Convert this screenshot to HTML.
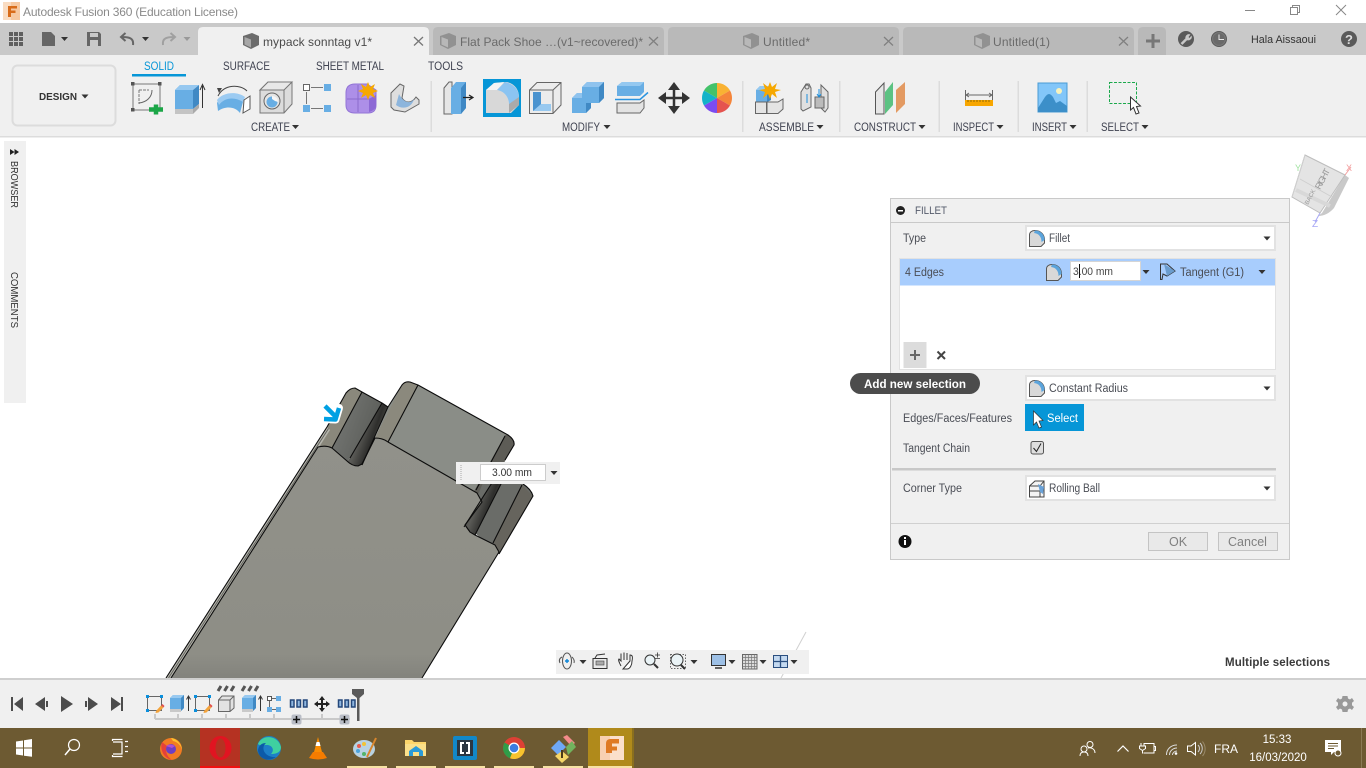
<!DOCTYPE html>
<html><head><meta charset="utf-8"><title>Autodesk Fusion 360</title>
<style>
html,body{margin:0;padding:0;background:#fff;width:1366px;height:768px;overflow:hidden}
svg{display:block;font-family:"Liberation Sans",sans-serif}
.l{font-size:11.500px;fill:#3f4250}
.p{font-size:11.500px;fill:#4a4d55}
.w{fill:#fff}
</style></head><body>
<svg width="1366" height="768" viewBox="0 0 1366 768" xmlns="http://www.w3.org/2000/svg">
<defs>
<linearGradient id="face" x1="0" y1="0" x2="0" y2="1"><stop offset="0" stop-color="#91918a"/><stop offset=".9" stop-color="#8e8e86"/><stop offset="1" stop-color="#83837d"/></linearGradient>
<linearGradient id="gro" x1="0" y1="0" x2="1" y2=".5"><stop offset="0" stop-color="#7a7c79"/><stop offset="1" stop-color="#5a5c58"/></linearGradient>
<linearGradient id="dg" x1="0" y1="0" x2="1" y2=".55"><stop offset="0" stop-color="#444442"/><stop offset=".45" stop-color="#5a5a56"/><stop offset=".7" stop-color="#2e2e2c"/><stop offset="1" stop-color="#5e5d58"/></linearGradient>
<g id="cube"><path d="M0 3L9 0L16 3V12L8 16L0 12Z" fill="currentColor"/><path d="M1.500 4L8 6.500V14.500L1.500 11.500Z" fill="#d9d9d9" fill-opacity=".55"/></g>
<path id="tri" d="M-3.500 0H3.500L0 4Z" fill="#333"/>
<g id="fil"><path d="M.5 16.500V5C.5 2 3 .5 6 .5C12 .5 15.500 5 15.500 10V13L12 16.500Z" fill="#d8d8d8" stroke="#555" stroke-width="1"/><path d="M6 .5C12 .5 15.500 5 15.500 10L12.500 12C12.500 7 10 3.500 5 3Z" fill="#5ba4dc"/></g>
<g id="rects"><rect x="0" y="0" width="3.500" height="7" fill="#8fb7e0" stroke="#24477a" stroke-width="1.500"/><rect x="6.500" y="0" width="3.500" height="7" fill="#8fb7e0" stroke="#24477a" stroke-width="1.500"/><rect x="13" y="0" width="3.500" height="7" fill="#8fb7e0" stroke="#24477a" stroke-width="1.500"/></g>
<g id="sk"><rect x=".5" y=".5" width="14" height="14" fill="none" stroke="#666"/><rect x="-1" y="-1" width="3" height="3" fill="#0b8fdc"/><rect x="13" y="-1" width="3" height="3" fill="#0b8fdc"/><rect x="-1" y="13" width="3" height="3" fill="#0b8fdc"/><path d="M9 15L14 9.500L16.500 11.500L11.500 16.500L8.500 17Z" fill="#f3a33c"/><path d="M14 9.500L16.500 11.500L17.500 10L15.500 8Z" fill="#e2504c"/></g>
<g id="ext"><path d="M0 3L3 0H14V13L11 16H0Z" fill="#68aee4"/><path d="M0 3L3 0H14L11 3Z" fill="#98c9f0"/><path d="M11 3L14 0V13L11 16Z" fill="#4089c4"/><rect x="0" y="14" width="11" height="3" fill="#c9c9c9"/><path d="M18.500 16V2M16.500 4.500L18.500 1L20.500 4.500" stroke="#333" fill="none"/></g>
<g id="hatch" stroke="#555" stroke-width="3"><path d="M0 5L3 0M6.500 5L9.500 0M13 5L16 0"/></g>
<g id="plusb"><rect x="-5" y="-5" width="10" height="10" rx="2" fill="#b9bdc6"/><path d="M-3.500 0H3.500M0-3.500V3.500" stroke="#111" stroke-width="1.500"/></g>
</defs>

<!-- viewport -->
<rect width="1366" height="768" fill="#fff"/>

<!-- title bar -->
<rect x="3" y="2" width="17" height="18" fill="#f6c9a2"/><rect x="3" y="2" width="8" height="18" fill="#f9dcc2"/>
<path d="M8 17V6H17V8.500H11V10.500H15.500V13H11V17Z" fill="#d86c1a"/>
<text x="23" y="16" font-size="12" fill="#8a8a8a" textLength="215">Autodesk Fusion 360 (Education License)</text>
<path d="M1245 10.500H1255" stroke="#888"/>
<path d="M1290.500 7.500H1297.500V14.500H1290.500ZM1292.500 7V5.500H1299.500V12.500H1298" fill="none" stroke="#888"/>
<path d="M1336 5L1346 15M1346 5L1336 15" stroke="#888"/>

<!-- tab bar -->
<rect x="0" y="23" width="1366" height="32" fill="#c9c9c9"/>
<g fill="#5f5f5f"><rect x="9" y="32" width="4" height="4"/><rect x="14" y="32" width="4" height="4"/><rect x="19" y="32" width="4" height="4"/><rect x="9" y="37" width="4" height="4"/><rect x="14" y="37" width="4" height="4"/><rect x="19" y="37" width="4" height="4"/><rect x="9" y="42" width="4" height="4"/><rect x="14" y="42" width="4" height="4"/><rect x="19" y="42" width="4" height="4"/></g>
<path d="M42 32H51L55 36V46H42Z" fill="#666"/><use href="#tri" x="64.500" y="37"/>
<path d="M87 32H99L101 34V46H87Z" fill="#666"/><rect x="90" y="33" width="8" height="4" fill="#c9c9c9"/><rect x="90" y="40" width="8" height="6" fill="#c9c9c9"/>
<path d="M133 45C134 38 129 37 122 37M125.500 33L121 37L125.500 41" fill="none" stroke="#666" stroke-width="2"/><use href="#tri" x="145.500" y="37"/>
<path d="M163 45C162 38 167 37 174 37M170.500 33L175 37L170.500 41" fill="none" stroke="#a0a0a0" stroke-width="2"/><path d="M183.500 37H190.500L187 41Z" fill="#999"/>

<path d="M198 55V32Q198 27 203 27H424Q429 27 429 32V55Z" fill="#f0f0f0"/>
<use href="#cube" x="243" y="33" color="#6c6c6c"/>
<text x="263" y="46" font-size="12" fill="#4a4a4a" textLength="109">mypack sonntag v1*</text>
<path d="M414 37L423 45.500M423 37L414 45.500" stroke="#777" stroke-width="1.300"/>

<g fill="#b9b9b9"><path d="M433 55V32Q433 27 438 27H659Q664 27 664 32V55Z"/><path d="M668 55V32Q668 27 673 27H894Q899 27 899 32V55Z"/><path d="M903 55V32Q903 27 908 27H1129Q1134 27 1134 32V55Z"/><path d="M1138 55V32Q1138 27 1143 27H1161Q1166 27 1166 32V55Z"/></g>
<g color="#919191"><use href="#cube" x="440" y="33"/><use href="#cube" x="743" y="33"/><use href="#cube" x="974" y="33"/></g>
<text x="460" y="46" font-size="12" fill="#6a6a6a" textLength="183">Flat Pack Shoe …(v1~recovered)*</text>
<text x="763" y="46" font-size="12" fill="#6a6a6a" textLength="47">Untitled*</text>
<text x="993" y="46" font-size="12" fill="#6a6a6a" textLength="57">Untitled(1)</text>
<g stroke="#808080" stroke-width="1.300"><path d="M649 37L658 45.500M658 37L649 45.500M884 37L893 45.500M893 37L884 45.500M1119 37L1128 45.500M1128 37L1119 45.500"/></g>
<path d="M1146 41H1160M1153 34V48" stroke="#777" stroke-width="3"/>
<circle cx="1186" cy="39" r="8" fill="#5a5a5a"/><path d="M1181.500 44L1186.500 39" stroke="#c9c9c9" stroke-width="2.500"/><path d="M1186 39.500A3.500 3.500 0 0 1 1190.500 34.500L1188.500 37L1189.500 38L1191.500 35.500A3.500 3.500 0 0 1 1186 39.500Z" fill="#c9c9c9"/>
<circle cx="1219" cy="39" r="7.500" fill="#777" stroke="#5a5a5a"/><circle cx="1219" cy="39" r="5.800" fill="#6a6a6a"/><path d="M1219 34.500V39.500H1224" stroke="#e8e8e8" fill="none"/>
<text x="1251" y="43" font-size="11" fill="#333" textLength="65" lengthAdjust="spacingAndGlyphs">Hala Aissaoui</text>
<circle cx="1349" cy="39" r="8" fill="#5a5a5a"/><text x="1349" y="44" font-size="13" font-weight="bold" fill="#ddd" text-anchor="middle">?</text>

<!-- ribbon -->
<rect x="0" y="55" width="1366" height="81" fill="#f0f0f0"/>
<rect x="0" y="136" width="1366" height="1.500" fill="#dcdcdc"/>
<rect x="12.500" y="65.500" width="103" height="60" rx="5" fill="#f0f0f0" stroke="#dcdcdc" stroke-width="2"/>
<text x="39" y="100" font-size="10.500" font-weight="bold" fill="#333" textLength="38" lengthAdjust="spacingAndGlyphs">DESIGN</text>
<use href="#tri" x="85" y="94.500"/>
<text x="144" y="70" font-size="11.500" fill="#0696d7" textLength="30" lengthAdjust="spacingAndGlyphs">SOLID</text>
<rect x="132" y="74" width="54" height="2.500" fill="#0696d7"/>
<text x="223" y="70" font-size="11.500" fill="#3f4250" textLength="47" lengthAdjust="spacingAndGlyphs">SURFACE</text>
<text x="316" y="70" font-size="11.500" fill="#3f4250" textLength="68" lengthAdjust="spacingAndGlyphs">SHEET METAL</text>
<text x="428" y="70" font-size="11.500" fill="#3f4250" textLength="35" lengthAdjust="spacingAndGlyphs">TOOLS</text>

<!-- create icons -->
<g>
<rect x="133" y="84" width="27" height="26" fill="none" stroke="#777"/>
<g fill="#555"><rect x="131" y="82" width="3.500" height="3.500"/><rect x="158" y="82" width="3.500" height="3.500"/><rect x="131" y="108" width="3.500" height="3.500"/></g>
<path d="M139 90H149M139 90V104" stroke="#777" stroke-dasharray="3 1" fill="none"/><path d="M139 103C147 102 152 97 152 90" fill="none" stroke="#666"/>
<path d="M156 104.500V114.500M149 109.500H163" stroke="#1ba647" stroke-width="4.500"/>
<path d="M175 90L180 85H193V109L190 109H175Z" fill="#68aee4"/><path d="M175 90L180 85H199L193 90Z" fill="#96c8f0"/><path d="M193 90L199 85V104L193 109Z" fill="#4089c4"/><rect x="175" y="109" width="18" height="5" fill="#c4c4c4"/><path d="M193 109L199 104V108L193 114Z" fill="#aaa"/>
<path d="M202.500 108V86M200 90L202.500 84.500L205 90" stroke="#333" fill="none"/>
<path d="M218 96C224 84 240 84 247 91" fill="none" stroke="#444"/><path d="M222 88L217 88L219 93Z" fill="#444"/>
<path d="M217 103C222 93 236 92 244 98L240 113C235 106 225 106 218 111Z" fill="#68aee4"/><path d="M217 100C223 92 237 91 245 97L243 102C235 97 225 97 219 105Z" fill="#9ccbf2"/><path d="M244 100L250 96V109L243 113Z" fill="#fff" stroke="#555"/>
<path d="M260 90L268 82H292V104L284 113H260Z" fill="#dcdcdc" stroke="#777"/><path d="M260 90L268 82H292L284 90Z" fill="#e8e8e8" stroke="#777"/><path d="M284 90V113" stroke="#777"/>
<circle cx="272" cy="101" r="8" fill="#e5e5e5" stroke="#666"/><circle cx="272" cy="102" r="5.500" fill="#68aee4"/><path d="M272 96A6 6 0 0 1 278 102L275 101L272 99Z" fill="#f6f6f6"/>
<rect x="303.500" y="84.500" width="6" height="6" fill="#fff" stroke="#666"/><rect x="324" y="84" width="7" height="7" fill="#68aee4"/><rect x="303" y="105" width="7" height="7" fill="#68aee4"/><rect x="324" y="105" width="7" height="7" fill="#68aee4"/>
<path d="M311 87.500H323M306.500 92V104M311 108.500H323" stroke="#777"/>
<path d="M346 93Q346 84 355 84H367L376 90V105Q376 113 368 113H355Q346 113 346 105Z" fill="#ad8fe8" stroke="#9274d6"/><path d="M347 99H370M358 85V112" stroke="#8a6bcd"/><path d="M369 99L376 95V105Q376 110 369 112Z" fill="#8d69d5"/>
<path d="M368 82L370 87L375 84L373 89L378 91L373 93L375 98L370 95L368 100L366 95L361 98L363 93L358 91L363 89L361 84L366 87Z" fill="#f6a800"/>
<path d="M391 93L400 84L404 86L402 98C406 104 412 103 416 97L419 100V104L405 112L394 110L391 107Z" fill="#dedede" stroke="#666"/><path d="M399 94C403 102 410 105 414 99C412 108 402 110 396 105Z" fill="#8db5dc"/>
</g>
<rect x="430.500" y="81" width="1.500" height="51" fill="#dcdcdc"/>

<!-- modify icons -->
<g>
<path d="M444 88L449 82H452V114H444Z" fill="#e6e6e6" stroke="#666"/><path d="M451 88L456 82H466V108L461 114H451Z" fill="#68aee4"/><path d="M461 88L466 82V108L461 114Z" fill="#3f88c4"/><path d="M463 97.500H472M469 95L473 97.500L469 100" stroke="#222" fill="none" stroke-width="1.200"/>
<rect x="483" y="79" width="38" height="38" fill="#0696d7"/>
<path d="M486 112V90L494 83L507 82C515 84 519 90 519 97V105L511 113H486Z" fill="#d8d8d8"/><path d="M486 90L494 83L504 82L497 90Z" fill="#f4f4f4"/><path d="M497 90L505 82C514 84 519 90 519 98L509 104C509 97 504 91 497 90Z" fill="#8bc4f2"/><path d="M509 104L519 97V105L509 113Z" fill="#aaa"/>
<path d="M529.500 90L537 82.500H561V105L553 113.500H529.500Z" fill="#ececec" stroke="#666"/><path d="M529.500 90H553V113.500M553 90L561 82.500" fill="none" stroke="#666"/><path d="M533 92H541V104H551V111H533Z" fill="#4a93cf"/><path d="M541 104H551V111H533Z" fill="#98c9f0"/>
<path d="M572 98L577 93H582V87L587 82H604V98L599 103H591V108L586 113H572Z" fill="#68aee4"/><path d="M582 87L587 82H604L599 87Z" fill="#8fc3ee"/><path d="M599 87L604 82V98L599 103Z" fill="#4089c4"/><path d="M586 103H591V108L586 113Z" fill="#4089c4"/><path d="M572 98L577 93H582V98Z" fill="#8fc3ee"/>
<path d="M617 86L622 82H644V92L640 96H617Z" fill="#68aee4"/><path d="M617 86L622 82H644L640 86Z" fill="#94c8f0"/><path d="M617 103H640L644 100V108L640 113H617Z" fill="#e3e3e3" stroke="#666"/><path d="M615 99.500H640L648 92.500" fill="none" stroke="#2a94e0" stroke-width="1.500"/>
<path d="M674 88V108M664 98H684" stroke="#333" stroke-width="2.500"/><path d="M674 82L680 90H668ZM674 114L680 106H668ZM658 98L666 92V104ZM690 98L682 92V104Z" fill="#333"/>
<path d="M717 98V83A15 15 0 0 1 730 90.500Z" fill="#f9b233"/><path d="M717 98L730 90.500A15 15 0 0 1 732 98A15 15 0 0 1 730 105.500Z" fill="#f5853a"/><path d="M717 98L730 105.500A15 15 0 0 1 717 113Z" fill="#e5534f"/><path d="M717 98V113A15 15 0 0 1 704 105.500Z" fill="#7b4cf0"/><path d="M717 98L704 105.500A15 15 0 0 1 704 90.500Z" fill="#13b3c9"/><path d="M717 98L704 90.500A15 15 0 0 1 717 83Z" fill="#43c26a"/>
</g>
<rect x="742" y="81" width="1.500" height="51" fill="#dcdcdc"/>

<!-- assemble -->
<g>
<path d="M756 90L760 86H771V100L767 102H756Z" fill="#68aee4"/><path d="M756 90L760 86H771L767 90Z" fill="#94c8f0"/><path d="M767 90L771 86V100L767 102Z" fill="#3f88c4"/>
<path d="M770 82L772 87L777 83L775 89L781 90L775 92L777 98L772 94L770 99L768 94L763 98L765 92L759 90L765 89L763 83L768 87Z" fill="#f6a800"/>
<rect x="755.500" y="102" width="11" height="11.500" fill="#e4e4e4" stroke="#666"/><path d="M767 102H778L783 99V109L778 113.500H767Z" fill="#e4e4e4" stroke="#666"/>
<path d="M801 92L806 84H809L811 88V107L803 111L801 109Z" fill="#e0e0e0" stroke="#666"/><circle cx="807" cy="87" r="2" fill="none" stroke="#666"/><path d="M807 94V103" stroke="#1c8edb"/>
<path d="M821 85L828 92V108L825 112L821 108Z" fill="#e0e0e0" stroke="#666"/><rect x="815" y="97" width="9" height="11" fill="#bbb" stroke="#666"/><path d="M819 89V97M817 94L819 97L821 94" stroke="#1c8edb" fill="none"/>
</g>
<rect x="839" y="81" width="1.500" height="51" fill="#dcdcdc"/>

<!-- construct -->
<path d="M875.500 92L884 83V114H875.500Z" fill="#e6e6e6" stroke="#555"/><path d="M885 92L893 82V105L885 114Z" fill="#5cc282"/><path d="M896 90L905 82V104L896 113Z" fill="#e39a62"/>
<rect x="938.500" y="81" width="1.500" height="51" fill="#dcdcdc"/>

<!-- inspect -->
<path d="M965.500 90V100M992.500 90V100M966 95H992M969 93L966 95L969 97M989 93L992 95L989 97" stroke="#666" fill="none"/>
<rect x="965" y="100" width="28" height="6" fill="#f7a600"/><path d="M968 100V102M971 100V102M974 100V102M977 100V102M980 100V102M983 100V102M986 100V102M989 100V102" stroke="#7a5c00" stroke-width=".8"/>
<rect x="1017.500" y="81" width="1.500" height="51" fill="#dcdcdc"/>

<!-- insert -->
<rect x="1038" y="83" width="29" height="29" fill="#82c6f9" stroke="#4a9bd4"/><path d="M1038 108L1045 97C1048 93 1050 93 1053 97L1056 103L1060 101L1067 106V112H1038Z" fill="#3c8fc9"/><circle cx="1059" cy="91" r="3" fill="#f7f2bd"/>
<rect x="1086.500" y="81" width="1.500" height="51" fill="#dcdcdc"/>

<!-- select -->
<rect x="1109.500" y="82.500" width="27" height="21" fill="none" stroke="#1aa84b" stroke-dasharray="3 1.500"/>
<path d="M1130.500 97V110L1133.500 107.500L1136 114L1139 113L1136.500 106.500L1140.500 106Z" fill="#fff" stroke="#333"/>

<!-- ribbon labels -->
<text x="251" y="131" class="l" textLength="39" lengthAdjust="spacingAndGlyphs">CREATE</text><use href="#tri" x="295.500" y="125"/>
<text x="562" y="131" class="l" textLength="38" lengthAdjust="spacingAndGlyphs">MODIFY</text><use href="#tri" x="607" y="125"/>
<text x="759" y="131" class="l" textLength="55" lengthAdjust="spacingAndGlyphs">ASSEMBLE</text><use href="#tri" x="820" y="125"/>
<text x="854" y="131" class="l" textLength="62" lengthAdjust="spacingAndGlyphs">CONSTRUCT</text><use href="#tri" x="922" y="125"/>
<text x="953" y="131" class="l" textLength="41" lengthAdjust="spacingAndGlyphs">INSPECT</text><use href="#tri" x="1000" y="125"/>
<text x="1032" y="131" class="l" textLength="35" lengthAdjust="spacingAndGlyphs">INSERT</text><use href="#tri" x="1073" y="125"/>
<text x="1101" y="131" class="l" textLength="38" lengthAdjust="spacingAndGlyphs">SELECT</text><use href="#tri" x="1145" y="125"/>

<!-- left panel -->
<rect x="4" y="141" width="22" height="262" fill="#f0f0f0"/>
<path d="M10 149V155L14.500 152ZM14.500 149V155L19 152Z" fill="#222"/>
<text transform="translate(11,161) rotate(90)" font-size="10.500" fill="#333" textLength="47" lengthAdjust="spacingAndGlyphs">BROWSER</text>
<text transform="translate(11,272) rotate(90)" font-size="10.500" fill="#333" textLength="56" lengthAdjust="spacingAndGlyphs">COMMENTS</text>

<!-- model -->
<g stroke-linejoin="round">
<path d="M375 438L388 408L402 385Q405 381 410 382L418 385L508 435Q515 440 514 445L482 502L388 442Z" fill="#8a8d87"/>
<path d="M375 438L402 385Q405 381 410 382L418 385L388 442Z" fill="#8b897d"/>
<path d="M505 435L508 435Q515 440 514 445L480 505L472 495Z" fill="#5d5c56"/>
<path d="M332 448L362 392L382 403L350 458L347 462Z" fill="url(#gro)"/>
<path d="M316 447L346 393Q350 388 355 388L362 392L332 448Z" fill="#8a887c"/>
<path d="M382 403L388 407L362 466L358 468L347 462L350 458Z" fill="url(#dg)"/>
<path d="M483 483L523 484Q531 489 533 496L499 554L475 533L465 525Z" fill="#6a6c68"/>
<path d="M495 478L503 480L475 535L464 527Z" fill="url(#dg)"/>
<path d="M522 485L533 496L499 554L493 543Z" fill="#66645d"/>
<path d="M166 678L327 427L330 430L171 678Z" fill="#b5b5ad"/>
<path d="M168.500 678L328.500 428.500" stroke="#5f5f5a" stroke-width=".9"/>
<path d="M171 678L318 447Q326 445 332 448L347 461Q352 466 358 466L362 464L375 438Q383 438 388 442L477 493L482 502L465 525L470 532L475 535L495 545L499 552L422 678Z" fill="url(#face)"/>
<g fill="none" stroke="#0c0c0c" stroke-width="1.100">
<path d="M166 678L327 427M171 678L318 447Q326 445 332 448L347 461Q352 466 358 466L362 464L375 438Q383 438 388 442L477 493L482 502L465 525L470 532L475 535L495 545L499 552L422 678"/>
<path d="M327 427L346 393Q350 388 355 388L362 392L382 403L388 407L402 385Q405 381 410 382L418 385L508 435Q515 440 514 445L505 460"/>
<path d="M362 392L332 448M382 403L350 458M388 407L362 465M418 385L388 442M505 436L476 490"/>
<path d="M503 480L475 535M522 485L493 543M495 478L464 527M523 484Q531 489 533 496L499 554"/>
</g>
</g>
<path d="M325 406L336 417M339 408L335.500 419.500L324 419" fill="none" stroke="#fff" stroke-width="8" stroke-linecap="round" stroke-linejoin="round"/>
<path d="M325 406L336 417M339 408L335.500 419.500L324 419" fill="none" stroke="#00a0e3" stroke-width="4.500" stroke-linejoin="round"/>

<!-- dimension input -->
<rect x="456" y="462" width="104" height="22" fill="#f0f0f0"/>
<path d="M461 465V481" stroke="#ccc" stroke-dasharray="1 1" stroke-width="2"/>
<rect x="480.500" y="464.500" width="65" height="16" fill="#fff" stroke="#ccc"/>
<text x="492" y="476" font-size="11" fill="#333" textLength="40" lengthAdjust="spacingAndGlyphs">3.00 mm</text>
<use href="#tri" x="554" y="471"/>

<!-- view cube -->
<path d="M1322 213L1345 175L1349 178L1334 208Q1327 216 1318 216Z" fill="#c9c9c9"/>
<path d="M1305 155L1345 175L1320 213L1292 197Z" fill="#e4e4e4" stroke="#bdbdbd"/>
<path d="M1300 179L1332 197M1292 197L1305 155" stroke="#cfcfcf" fill="none"/>
<path d="M1296 190L1330 206" stroke="#d8d8d8" stroke-width="4"/>
<text transform="translate(1320,190) rotate(-62)" font-size="9" fill="#999" textLength="22">RIGHT</text>
<text transform="translate(1308,205) rotate(-62)" font-size="6" fill="#999">BACK</text>
<text x="1295" y="171" font-size="9" fill="#9fe29f">Y</text><text x="1346" y="171" font-size="9" fill="#f3a0a0">X</text><text x="1312" y="227" font-size="10" fill="#a8a8f5">Z</text>
<path d="M1345 175L1351 167" stroke="#f3a0a0"/><path d="M1320 213L1315 222" stroke="#a8a8f5"/>

<!-- panel -->
<rect x="890.500" y="198.500" width="399" height="361" fill="#f0f0f0" stroke="#c9c9c9"/>
<path d="M891 222.500H1289" stroke="#c9c9c9"/>
<circle cx="900.500" cy="210.500" r="4.500" fill="#222"/><rect x="898" y="210" width="5" height="1.500" fill="#fff"/>
<text x="915" y="214" font-size="11" fill="#555b6b" textLength="32" lengthAdjust="spacingAndGlyphs">FILLET</text>
<text x="903" y="242" class="p" textLength="23" lengthAdjust="spacingAndGlyphs">Type</text>
<g fill="#fff" stroke="#e2e2e2" stroke-width="2"><rect x="1026" y="226" width="249" height="24"/><rect x="1026" y="376" width="249" height="24"/><rect x="1026" y="476" width="249" height="24"/></g>
<use href="#fil" x="1029" y="230"/><use href="#fil" x="1029" y="380"/>
<text x="1049" y="242" class="p" textLength="21" lengthAdjust="spacingAndGlyphs">Fillet</text>
<use href="#tri" x="1267" y="236.500"/><use href="#tri" x="1267" y="386.500"/><use href="#tri" x="1267" y="486.500"/>

<rect x="899.500" y="258.500" width="376" height="111" fill="#fff" stroke="#e2e2e2"/>
<rect x="900" y="259" width="375" height="26.500" fill="#a8cdfd"/>
<text x="905" y="276" class="p" textLength="39" lengthAdjust="spacingAndGlyphs">4 Edges</text>
<use href="#fil" x="1046" y="264"/>
<rect x="1070.500" y="261.500" width="70" height="19" fill="#fff" stroke="#d5d5d5"/>
<text x="1073" y="275" font-size="11" fill="#444" textLength="40" lengthAdjust="spacingAndGlyphs">3.00 mm</text>
<rect x="1079" y="264" width="1" height="14" fill="#111"/>
<use href="#tri" x="1146" y="270"/>
<path d="M1160.500 264H1167L1175 271L1167 276L1163 274L1162 279.500L1160.500 279.500Z" fill="#a8cdfd" stroke="#333"/><path d="M1164 264L1175 271L1167 276Z" fill="#6a9ccd"/>
<text x="1180" y="276" class="p" textLength="64" lengthAdjust="spacingAndGlyphs">Tangent (G1)</text>
<use href="#tri" x="1262" y="270"/>
<rect x="903.500" y="342" width="23" height="26" fill="#dcdcdc"/>
<path d="M910 355H920M915 350V360" stroke="#666" stroke-width="2"/>
<path d="M937.500 351.500L945 359M945 351.500L937.500 359" stroke="#444" stroke-width="2"/>

<text x="1049" y="392" class="p" textLength="79" lengthAdjust="spacingAndGlyphs">Constant Radius</text>
<rect x="850" y="373" width="130" height="21" rx="10.500" fill="#4c4c4c"/>
<text x="864" y="388" font-size="11.500" font-weight="bold" fill="#fff" textLength="102" lengthAdjust="spacingAndGlyphs">Add new selection</text>

<text x="903" y="422" class="p" textLength="109" lengthAdjust="spacingAndGlyphs">Edges/Faces/Features</text>
<rect x="1025" y="404" width="59" height="27" fill="#0696d7"/>
<path d="M1033.500 411V425L1036.500 422L1039 428L1041.500 427L1039 421L1043 420.500Z" fill="#fff" stroke="#333" stroke-width=".7"/>
<text x="1047" y="422" font-size="11.500" fill="#fff" textLength="31" lengthAdjust="spacingAndGlyphs">Select</text>
<text x="903" y="452" class="p" textLength="67" lengthAdjust="spacingAndGlyphs">Tangent Chain</text>
<rect x="1031" y="441.500" width="12.500" height="12.500" rx="2" fill="#dedede" stroke="#555"/>
<path d="M1033.500 448L1036.500 451.500L1041 443.500" fill="none" stroke="#222"/>
<rect x="892" y="468" width="384" height="2.500" fill="#c8c8c8"/>
<text x="903" y="492" class="p" textLength="59" lengthAdjust="spacingAndGlyphs">Corner Type</text>
<path d="M1029.500 486L1035 481H1044V497H1029.500ZM1029.500 486H1040V497M1040 486L1044 481M1029.500 491H1040" fill="#f4f4f4" stroke="#444"/><path d="M1038 484L1044 487L1043 494L1040 492Z" fill="#6aa2d8"/>
<text x="1049" y="492" class="p" textLength="51" lengthAdjust="spacingAndGlyphs">Rolling Ball</text>
<path d="M891 523.500H1289" stroke="#d0d0d0"/>
<circle cx="905" cy="541.500" r="6.500" fill="#111"/><rect x="904" y="540" width="2" height="5" fill="#fff"/><rect x="904" y="537" width="2" height="2" fill="#fff"/>
<rect x="1148.500" y="532.500" width="59" height="18" fill="#e9e9e9" stroke="#c4c4c4"/>
<rect x="1218.500" y="532.500" width="59" height="18" fill="#e9e9e9" stroke="#c4c4c4"/>
<text x="1178" y="546" font-size="12.500" fill="#808080" text-anchor="middle">OK</text>
<text x="1247.500" y="546" font-size="12.500" fill="#808080" text-anchor="middle">Cancel</text>

<!-- nav bar -->
<path d="M806 632L781 678" stroke="#d0d0d0"/>
<rect x="556" y="650" width="253" height="24" fill="#f0f0f0"/>
<ellipse cx="567" cy="661" rx="4.500" ry="8" fill="none" stroke="#555"/><path d="M562 657Q558 659 560 663M572 657Q575 660 574 663" fill="none" stroke="#555"/><path d="M565 661H569M567 659V663" stroke="#0a85d8" stroke-width="1.400"/>
<use href="#tri" x="583" y="660"/>
<rect x="593" y="658.500" width="14" height="10" fill="#e9e9e9" stroke="#333"/><rect x="596" y="661" width="8" height="4" fill="#aaa" stroke="#444" stroke-width=".6"/><path d="M595 658L597 655L605 654" stroke="#333" fill="none"/>
<path d="M621 666C619 662 618 660 619 659L621 661V654M621 660V653.500M624 660V652.500M627 660V653M630 661V655C632 655 633 656 632 661C632 665 630 669 627 669H623Z" fill="#fff" stroke="#333"/>
<circle cx="650" cy="660" r="5" fill="#eaf3f6" stroke="#333"/><path d="M654 664L658 668" stroke="#333" stroke-width="2"/><path d="M655 655H660M657.500 652.500V657.500M655 658.500H660" stroke="#333" stroke-width=".8"/>
<rect x="670.500" y="654.500" width="15" height="14" fill="none" stroke="#666" stroke-dasharray="1.500 1.500"/><circle cx="677" cy="660" r="6" fill="#eaf3f6" stroke="#333"/><path d="M681 665L685 669" stroke="#333" stroke-width="2"/>
<use href="#tri" x="694" y="660"/>
<rect x="711.500" y="654.500" width="14" height="11" fill="#9dc0e6" stroke="#333"/><path d="M715 668H722" stroke="#333" stroke-width="1.500"/><use href="#tri" x="732" y="660"/>
<g stroke="#666" fill="#dcdcdc"><rect x="742.500" y="654.500" width="14.500" height="14.500"/></g><path d="M745.500 654.500V669M748.500 654.500V669M751.500 654.500V669M754.500 654.500V669M742.500 657.500H757M742.500 660.500H757M742.500 663.500H757M742.500 666.500H757" stroke="#777" stroke-width=".7"/>
<use href="#tri" x="763" y="660"/>
<rect x="773.500" y="655.500" width="14" height="12" fill="#c4d9f0" stroke="#2b4f80"/><path d="M773.500 661.500H787.500M780.500 655.500V667.500" stroke="#2b4f80" stroke-width="1.300"/><use href="#tri" x="794" y="660"/>
<text x="1225" y="666" font-size="11.500" font-weight="bold" fill="#3a3a3a" textLength="105">Multiple selections</text>

<!-- timeline -->
<rect x="0" y="678" width="1366" height="2" fill="#cfcfcf"/>
<rect x="0" y="680" width="1366" height="48" fill="#f0f0f0"/>
<g fill="#4c4c4c">
<path d="M11 697H13V711H11ZM23 697V711L14 704Z"/>
<path d="M45 697V711L35 704ZM46 701H48V707H46Z"/>
<path d="M61 696V712L73 704Z"/>
<path d="M85 701H87V707H85ZM88 697V711L98 704Z"/>
<path d="M111 697V711L121 704ZM121 697H123V711H121Z"/>
</g>
<use href="#sk" x="147" y="696"/><use href="#ext" x="170" y="695"/><use href="#sk" x="195" y="696"/>
<use href="#hatch" x="218" y="686"/>
<path d="M218.500 700L222 696H234V708L230 711.500H218.500Z" fill="#e2e2e2" stroke="#666"/><path d="M218.500 700H230V711.500M230 700L234 696" fill="none" stroke="#666"/>
<use href="#hatch" x="242" y="686"/><use href="#ext" x="242" y="695"/>
<rect x="267.500" y="696.500" width="4" height="4" fill="#fff" stroke="#555"/><rect x="276" y="696" width="5" height="5" fill="#68aee4"/><rect x="267" y="707" width="5" height="5" fill="#68aee4"/><rect x="276" y="707" width="5" height="5" fill="#68aee4"/><path d="M272 698.500H276M269.500 701V707M272 709.500H276" stroke="#666"/>
<use href="#rects" x="290.500" y="700"/>
<path d="M322 696L325 700H323V703H326V701L330 704L326 707V705H323V708H325L322 712L319 708H321V705H318V707L314 704L318 701V703H321V700H319Z" fill="#222"/>
<use href="#rects" x="338.500" y="700"/>
<path d="M155 719H350" stroke="#c9c9c9" stroke-width="2"/>
<path d="M155 714V719M178 714V719M202 714V719M226 714V719M250 714V719M274 714V719M322 714V719" stroke="#c9c9c9" stroke-width="2"/>
<use href="#plusb" x="296.500" y="719.500"/><use href="#plusb" x="344.500" y="719.500"/>
<path d="M352 689H364V694L359.500 698V721H357V698L352 694Z" fill="#5a5a5a"/>
<path d="M1342.500 696H1347.500L1348 698.500L1350 699.500L1352 698L1354 701L1352 702.800V705.200L1354 707L1352 710L1350 708.500L1348 709.500L1347.500 712H1342.500L1342 709.500L1340 708.500L1338 710L1336 707L1338 705.200V702.800L1336 701L1338 698L1340 699.500L1342 698.500Z" fill="#999"/><circle cx="1345" cy="704" r="2.500" fill="#f0f0f0"/>

<!-- taskbar -->
<rect x="0" y="728" width="1366" height="40" fill="#6d5a32"/>
<g fill="#fff"><path d="M16 741.500L23 740.500V747.500H16ZM24 740.300L32 739V747.500H24ZM16 748.500H23V755.500L16 754.500ZM24 748.500H32V756.800L24 755.700Z"/></g>
<circle cx="74" cy="745" r="5.500" fill="none" stroke="#fff" stroke-width="1.200"/><path d="M70 749L65 755" stroke="#fff" stroke-width="1.500"/>
<path d="M113 742H122V754H113M112.500 741V739.500H122.500M112.500 755V756.500H122.500M125 741.500H128M125 746.500H128M125 751.500H128" fill="none" stroke="#fff" stroke-width="1.200"/>
<circle cx="171" cy="749" r="11" fill="#f27b22"/><path d="M171 738C176 738 182 744 182 750C181 746 178 742 173 741Z" fill="#fcc12f"/><path d="M162 742C160 747 162 758 172 760C166 756 165 750 167 746Z" fill="#e5413a"/><circle cx="171" cy="749" r="5" fill="#6d3fc4"/><path d="M166 746Q170 743 175 746L172 748Z" fill="#b14fd0"/>
<rect x="200" y="728" width="40" height="40" fill="#b53222"/><rect x="200" y="766" width="40" height="2" fill="#f01010"/>
<ellipse cx="220.500" cy="748" rx="11" ry="12" fill="#e11421"/><ellipse cx="220.500" cy="748" rx="5" ry="9.500" fill="#b53222"/>
<circle cx="269" cy="748" r="12" fill="#1d7fc7"/><path d="M258 744C262 734 278 735 281 747C281 753 275 754 271 754C275 750 272 745 267 745C263 745 260 746 258 744Z" fill="#3fd0a0"/><path d="M258 750C259 745 262 743 266 743C260 748 265 758 276 757C268 763 258 758 258 750Z" fill="#0c5aa8"/>
<path d="M318 737L322 752H314Z" fill="#fb8c00"/><path d="M316.500 742H319.500L320.500 746H315.500Z" fill="#fff"/><path d="M313 752H323L327 758Q318 761 309 758Z" fill="#f57c00"/>
<ellipse cx="364" cy="749" rx="11" ry="9" fill="#b8d2e2"/><circle cx="359" cy="746" r="2" fill="#e85a4f"/><circle cx="364" cy="744" r="2" fill="#f2c335"/><circle cx="358" cy="751" r="2" fill="#4ba3dc"/><circle cx="364" cy="754" r="2" fill="#53b46a"/><path d="M367 757L376 738" stroke="#d9862c" stroke-width="2"/>
<path d="M405 740H412L414 742H426V756H405Z" fill="#fdd66b"/><rect x="405" y="744" width="21" height="12" fill="#fbe08a"/><path d="M409 756V751L416 746L423 751V756H419V752H413V756Z" fill="#2a9bd8"/>
<rect x="453" y="736" width="24" height="24" rx="2" fill="#1288c9"/><rect x="457" y="740" width="16" height="16" fill="#2b3642"/><path d="M464 743H461V753H464M466 743H469V753H466" fill="none" stroke="#fff" stroke-width="2"/>
<circle cx="514" cy="748" r="11" fill="#dd4035"/><path d="M514 748L504.500 742.500A11 11 0 0 0 510 758.300Z" fill="#2f9d48"/><path d="M514 748H525A11 11 0 0 1 510 758.300Z" fill="#f7c32d"/><circle cx="514" cy="748" r="5.500" fill="#fff"/><circle cx="514" cy="748" r="4.300" fill="#3d7de0"/>
<path d="M551 748L559 740L566 747L558 755Z" fill="#6fa8f5"/><path d="M563 737L567 735L575 743L571 746Z" fill="#f48b8b"/><path d="M566 747L572 741L576 747L568 755Z" fill="#72b35e"/><path d="M555 756L562 751L569 757L562 763Z" fill="#f5d668"/><path d="M562 750V758" stroke="#4a3a1a" stroke-width="2"/>
<rect x="588" y="728" width="44" height="40" fill="#b08a1b"/><rect x="632" y="728" width="2" height="40" fill="#8a6f1e"/>
<rect x="600" y="736" width="24" height="24" fill="#fbe0cb"/><rect x="600" y="736" width="10" height="24" fill="#f8d0b1"/>
<path d="M606 753V744C606 740 608 739 611 739H619V743.500H612V746.500H617V750.500H612V753Z" fill="#df7a24"/>
<g fill="#f6e2a4"><rect x="347" y="766" width="40" height="2"/><rect x="396" y="766" width="40" height="2"/><rect x="445" y="766" width="40" height="2"/><rect x="494" y="766" width="40" height="2"/><rect x="543" y="766" width="40" height="2"/><rect x="588" y="766" width="44" height="2"/></g>

<g fill="none" stroke="#fff" stroke-width="1">
<circle cx="1084" cy="749" r="3"/><path d="M1080 756C1080 753 1082 752 1084 752C1087 752 1088 754 1088 756"/><circle cx="1090" cy="744.500" r="3"/><path d="M1088 748C1091 747 1095 749 1095 753"/>
<path d="M1117.500 751.500L1123 746L1128.500 751.500" stroke-width="1.200"/>
<path d="M1143.500 743.500H1154V753H1143.500M1154.500 746.500H1155.500V750.500H1154.500M1141 743V746M1144 743V746M1139.500 746H1145.500V748.500L1142.500 750.500L1139.500 748.500ZM1142.500 750.500V753.500"/>
<path d="M1166.500 755C1166.500 749 1171 745 1177 745M1169.500 755C1169.500 751 1173 748 1177 748M1172.500 755C1172.500 753 1174.500 751 1177 751" stroke="#ddd"/>
<path d="M1187.500 746H1191L1195.500 742.500V755L1191 751.500H1187.500Z"/><path d="M1198 745C1200 747 1200 750 1198 752M1200 743C1203 746 1203 751 1200 754" stroke="#ccc"/><path d="M1202.500 741.500C1206 746 1206 752 1202.500 756" stroke="#998a6a"/>
</g>
<circle cx="1176" cy="753.500" r="1.300" fill="#fff"/>
<text x="1214" y="753" font-size="12" fill="#fff">FRA</text>
<text x="1277" y="743" font-size="11.500" fill="#fff" text-anchor="middle">15:33</text>
<text x="1278" y="761" font-size="11.500" fill="#fff" text-anchor="middle">16/03/2020</text>
<path d="M1325 740H1341V752H1334L1331 755V752H1325Z" fill="#fff"/><path d="M1328 743.500H1338M1328 746H1338M1328 748.500H1334" stroke="#6d5a32"/><circle cx="1338" cy="753" r="3" fill="#6d5a32" stroke="#fff"/>
<rect x="1361" y="728" width="1" height="40" fill="#8a7a55"/>
</svg>
</body></html>
